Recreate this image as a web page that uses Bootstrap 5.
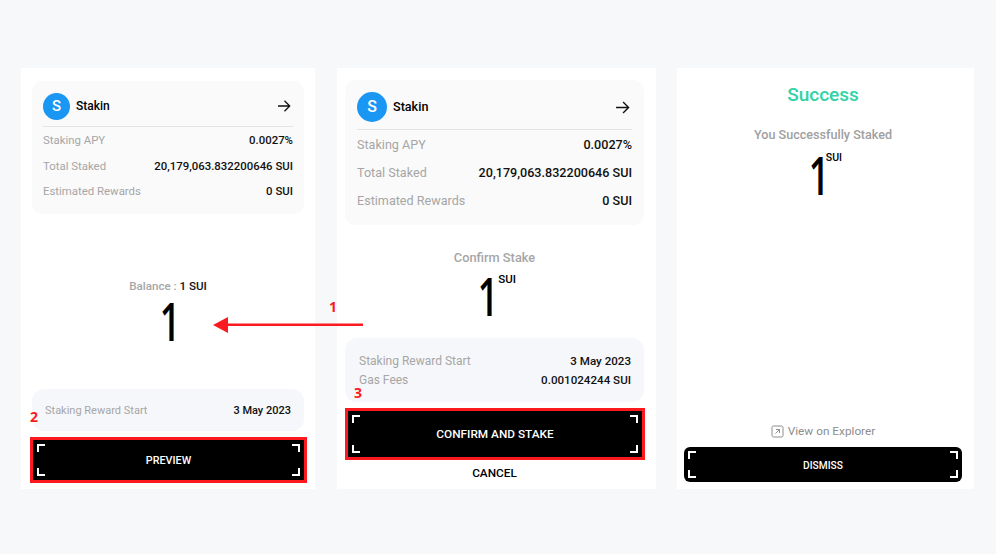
<!DOCTYPE html>
<html lang="en"><head><meta charset="utf-8"><title>Stake</title>
<link href="https://cdn.jsdelivr.net/npm/bootstrap@5.3.0/dist/css/bootstrap.min.css" rel="stylesheet">
<style>
html,body{height:100%}
body{background:#f7f8fa;font-family:Roboto,"Liberation Sans",sans-serif;color:#000;overflow:hidden}
.stage{position:relative;width:996px;height:554px;padding:68px 0 0 21px;gap:21px}
.pane{background:#fff;height:421px;flex:none}
.p1{width:294px;padding:13px 11px 6px 9px;margin-right:1px}
.p2{width:319px;padding:12px 12px 8px 8px}
.p3{width:297px;padding:15px 12px 7px 7px}
.info{background:#fafafa;border-radius:10px}
.p1 .info{margin:0 0 0 2px;padding:11px;height:133px;font-size:11.4px}
.p2 .info{padding:12px;height:145px;font-size:12.6px}
.av{background:#1a96f3;color:#fff;border-radius:50%;flex:none;font-weight:500}
.p1 .av{width:27px;height:27px;font-size:15px}
.p2 .av{width:30px;height:30px;font-size:16px}
.hd{font-weight:500}
.hd svg{margin-right:2px}
.p1 .hd{height:35px;padding-bottom:6px;font-size:12px;border-bottom:1px solid #e3e3e3;margin-bottom:1px}
.p2 .hd{height:38px;padding-bottom:7px;font-size:12.6px;border-bottom:1px solid #e3e3e3;margin-bottom:1px}
.p1 .rw{height:25.5px}
.p2 .rw{height:28px}
.lb{color:#a6a6a6}
.vl{font-weight:500;color:#111}
.bal{font-size:11.6px;color:#a6a6a6;font-weight:500;margin-top:64px;line-height:16px;padding-left:2px}
.bal b{color:#111;font-weight:500}
.big{font-family:"Open Sans",sans-serif;font-weight:600;font-size:53px;line-height:46px;text-align:center;padding-left:6px}
.digit{display:inline-block;transform:scaleX(.68)}
.sub{background:#f6f7fa;border-radius:12px;color:#a6a6a6}
.p1 .sub{margin:auto 0 0 2px;height:42px;padding:2px 13px 0;font-size:11px}
.p2 .sub{height:64px;padding:16px 13px 12px 14px;font-size:12px;line-height:15px;margin:auto 0 0 0}
.p2 .sub .vl{font-size:11.6px}
.cta{background:#000;color:#fff;position:relative;font-weight:500;text-align:center}
.red{border:3px solid #fb1a20}
.p1 .cta{margin:6px 0 0 0;width:277px;height:46px;font-size:10.8px;padding-top:2px}
.p2 .cta{margin:6px 0 0 0;width:300px;height:52px;font-size:11.8px;padding-top:2px}
.p3 .cta{width:278px;height:35px;font-size:10.2px;border-radius:6px;padding-top:2px}
.cn{position:absolute;width:8px;height:8px;border:2px solid #fff}
.cn.a{top:4px;left:4px;border-right:0;border-bottom:0}
.cn.b{top:4px;right:4px;border-left:0;border-bottom:0}
.cn.c{bottom:4px;left:4px;border-right:0;border-top:0}
.cn.d{bottom:4px;right:4px;border-left:0;border-top:0}
.cancel{font-size:11.8px;font-weight:500;line-height:16px;margin-top:5px}
.conf{font-size:12.8px;color:#a6a6a6;font-weight:500;margin-top:24px;line-height:18px}
.amt{position:relative;width:max-content;margin:6px auto 0;padding:0 13px 0 0}
.p3 .amt{padding-right:7px;margin-top:9px}
.amt sup{position:absolute;left:25.5px;top:0;font-family:Roboto,sans-serif;font-size:11.5px;line-height:12px;font-weight:500}
.p3 .amt sup{left:21.5px;font-size:10.5px}
.ok{color:#2fd3a5;font-size:19px;font-weight:500;line-height:24px}
.you{font-size:12.6px;color:#a0a0a0;font-weight:500;line-height:16px;margin-top:20px}
.xpl{font-size:11.8px;color:#8d8d8d;margin-top:auto;margin-bottom:8px;line-height:16px}
.note{position:absolute;color:#fb1a20;font-weight:700;font-size:14px;line-height:16px;font-family:"Open Sans",sans-serif}
.arrow{position:absolute;left:212px;top:314px}
</style></head>
<body>
<div class="stage d-flex align-items-start">
  <section class="pane p1 d-flex flex-column">
    <div class="info">
      <div class="hd d-flex align-items-center gap-2"><span class="av d-flex align-items-center justify-content-center">S</span><span class="flex-grow-1" style="margin-left:-2px">Stakin</span>
        <svg width="14" height="14" viewBox="0 0 14 14" fill="none" stroke="#111" stroke-width="1.3"><path d="M1 7H12.5M7.5 1.8 12.7 7 7.5 12.2"/></svg></div>
      <div class="rw d-flex justify-content-between align-items-center"><span class="lb">Staking APY</span><span class="vl">0.0027%</span></div>
      <div class="rw d-flex justify-content-between align-items-center"><span class="lb">Total Staked</span><span class="vl">20,179,063.832200646 SUI</span></div>
      <div class="rw d-flex justify-content-between align-items-center"><span class="lb">Estimated Rewards</span><span class="vl">0 SUI</span></div>
    </div>
    <div class="bal text-center">Balance : <b>1 SUI</b></div>
    <div class="big mt-1"><span class="digit">1</span></div>
    <div class="sub d-flex justify-content-between align-items-center"><span>Staking Reward Start</span><span class="vl">3 May 2023</span></div>
    <div class="cta red d-flex align-items-center justify-content-center"><i class="cn a"></i><i class="cn b"></i><i class="cn c"></i><i class="cn d"></i>PREVIEW</div>
  </section>
  <section class="pane p2 d-flex flex-column">
    <div class="info">
      <div class="hd d-flex align-items-center gap-2"><span class="av d-flex align-items-center justify-content-center">S</span><span class="flex-grow-1" style="margin-left:-2px">Stakin</span>
        <svg width="15" height="15" viewBox="0 0 14 14" fill="none" stroke="#111" stroke-width="1.3"><path d="M1 7H12.5M7.5 1.8 12.7 7 7.5 12.2"/></svg></div>
      <div class="rw d-flex justify-content-between align-items-center"><span class="lb">Staking APY</span><span class="vl">0.0027%</span></div>
      <div class="rw d-flex justify-content-between align-items-center"><span class="lb">Total Staked</span><span class="vl">20,179,063.832200646 SUI</span></div>
      <div class="rw d-flex justify-content-between align-items-center"><span class="lb">Estimated Rewards</span><span class="vl">0 SUI</span></div>
    </div>
    <div class="conf text-center">Confirm Stake</div>
    <div class="big amt"><span class="digit">1</span><sup>SUI</sup></div>
    <div class="sub">
      <div class="d-flex justify-content-between mb-1"><span>Staking Reward Start</span><span class="vl">3 May 2023</span></div>
      <div class="d-flex justify-content-between"><span>Gas Fees</span><span class="vl">0.001024244 SUI</span></div>
    </div>
    <div class="cta red d-flex align-items-center justify-content-center"><i class="cn a"></i><i class="cn b"></i><i class="cn c"></i><i class="cn d"></i>CONFIRM AND STAKE</div>
    <div class="cancel text-center">CANCEL</div>
  </section>
  <section class="pane p3 d-flex flex-column">
    <div class="ok text-center">Success</div>
    <div class="you text-center">You Successfully Staked</div>
    <div class="big amt"><span class="digit">1</span><sup>SUI</sup></div>
    <div class="xpl d-flex justify-content-center align-items-center gap-1">
      <svg width="13" height="13" viewBox="0 0 13 13" fill="none" stroke="#8d8d8d"><rect x="1" y="1" width="11" height="11" rx="1.5"/><path d="M4.5 8.5 8.5 4.5M5 4.5H8.5V8"/></svg><span>View on Explorer</span></div>
    <div class="cta d-flex align-items-center justify-content-center"><i class="cn a"></i><i class="cn b"></i><i class="cn c"></i><i class="cn d"></i>DISMISS</div>
  </section>
  <span class="note" style="left:329px;top:299px">1</span>
  <span class="note" style="left:30px;top:409px">2</span>
  <span class="note" style="left:354px;top:385px">3</span>
  <svg class="arrow" width="152" height="22" viewBox="0 0 152 22"><path d="M15 9.5H151V12H15z" fill="#fb1a20"/><path d="M1 11 16 3V19z" fill="#fb1a20"/></svg>
</div>
<script src="https://cdn.jsdelivr.net/npm/bootstrap@5.3.0/dist/js/bootstrap.bundle.min.js"></script>
</body></html>
